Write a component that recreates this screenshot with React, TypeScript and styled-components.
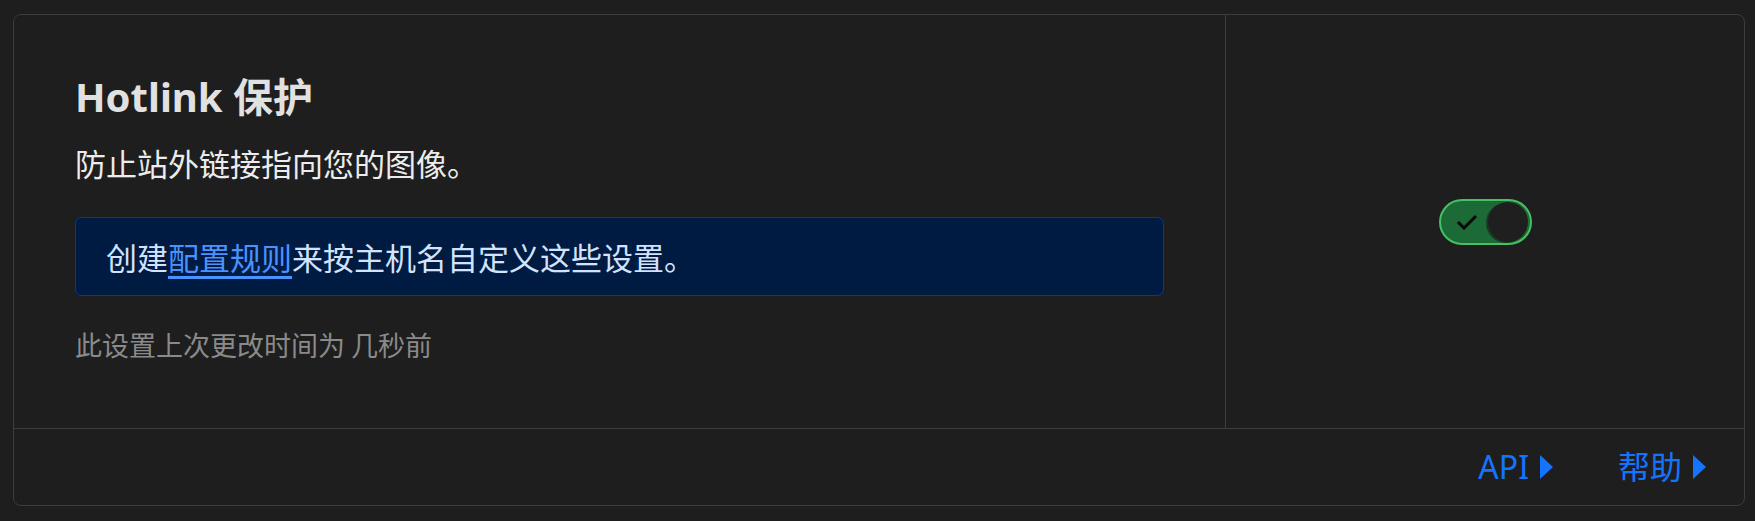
import React from "react";
import styled, { createGlobalStyle } from "styled-components";

const GlobalStyle = createGlobalStyle`
  html, body {
    margin: 0;
    padding: 0;
    background: #1e1e1e;
  }
  body {
    font-family: "Noto Sans", "Noto Sans CJK SC", sans-serif;
  }
`;

const Page = styled.div`
  padding: 14px 10px 14px 13px;
  background: #1e1e1e;
`;

const Card = styled.section`
  border: 1px solid #3c3c3c;
  border-radius: 8px;
  background: #1e1e1e;
  overflow: hidden;
`;

const Main = styled.div`
  display: grid;
  grid-template-columns: 1fr 519px;
  border-bottom: 1px solid #3c3c3c;
`;

const Content = styled.div`
  display: flex;
  flex-direction: column;
  padding: 58px 61px 63px 61px;
`;

const Title = styled.h2`
  margin: 0;
  font-size: 40px;
  line-height: 48px;
  font-weight: 700;
  color: #e1e1e1;
  font-family: "Noto Sans", "Noto Sans CJK SC", sans-serif;
`;

const Subtitle = styled.p`
  margin: 19px 0 0 0;
  font-size: 31px;
  line-height: 46px;
  color: #ececec;
  font-family: "Noto Sans CJK SC", sans-serif;
`;

const Callout = styled.div`
  margin-top: 31px;
  padding: 16px 30px;
  border: 1px solid #0b3a82;
  border-radius: 7px;
  background: #001b42;
  color: #d2e3ff;
  font-size: 31px;
  line-height: 45px;
  font-family: "Noto Sans CJK SC", sans-serif;
`;

const Link = styled.a`
  color: #4a93ff;
  text-decoration: underline;
  text-decoration-thickness: 3px;
  text-underline-offset: 6px;
  cursor: pointer;
`;

const Footnote = styled.p`
  margin: 29px 0 0 0;
  font-size: 27px;
  line-height: 40px;
  color: #8a8a8a;
  font-family: "Noto Sans CJK SC", sans-serif;
`;

const Side = styled.div`
  border-left: 1px solid #3c3c3c;
  display: flex;
  align-items: center;
  justify-content: center;
`;

const Switch = styled.button<{ $on: boolean }>`
  position: relative;
  width: 93px;
  height: 46px;
  box-sizing: border-box;
  border-radius: 23px;
  border: 2px solid #45c066;
  background: ${(p) => (p.$on ? "#1c6a36" : "#333")};
  padding: 0;
  margin: 0 0 0 1px;
  cursor: pointer;
  display: flex;
  align-items: center;
`;

const Knob = styled.span`
  position: absolute;
  right: 2px;
  top: 1px;
  width: 40px;
  height: 40px;
  border-radius: 50%;
  background: #1f1f1f;
  box-shadow: -2px 1px 0 #163d22;
`;

const Check = styled.svg`
  margin-left: 15px;
`;

const Footer = styled.div`
  height: 76px;
  display: flex;
  align-items: center;
  justify-content: flex-end;
  gap: 64px;
  padding-right: 37px;
`;

const FooterLink = styled.a`
  display: flex;
  align-items: center;
  gap: 10px;
  color: #1574ff;
  font-size: 32px;
  line-height: 40px;
  font-family: "Noto Sans", "Noto Sans CJK SC", sans-serif;
  cursor: pointer;
`;

const Arrow = () => (
  <svg width="15" height="26" viewBox="0 0 15 26">
    <path d="M1 1 L14 13 L1 25 Z" fill="#1574ff" />
  </svg>
);

export default function App() {
  return (
    <>
      <GlobalStyle />
      <Page>
        <Card>
          <Main>
            <Content>
              <Title>Hotlink 保护</Title>
              <Subtitle>防止站外链接指向您的图像。</Subtitle>
              <Callout>
                创建<Link>配置规则</Link>来按主机名自定义这些设置。
              </Callout>
              <Footnote>此设置上次更改时间为 几秒前</Footnote>
            </Content>
            <Side>
              <Switch $on={true} aria-label="Hotlink 保护">
                <Check width="22" height="16" viewBox="0 0 22 16">
                  <path
                    d="M2 8 L8 14 L20 2"
                    fill="none"
                    stroke="#0a0a0a"
                    strokeWidth="3"
                  />
                </Check>
                <Knob />
              </Switch>
            </Side>
          </Main>
          <Footer>
            <FooterLink>
              API
              <Arrow />
            </FooterLink>
            <FooterLink>
              帮助
              <Arrow />
            </FooterLink>
          </Footer>
        </Card>
      </Page>
    </>
  );
}
